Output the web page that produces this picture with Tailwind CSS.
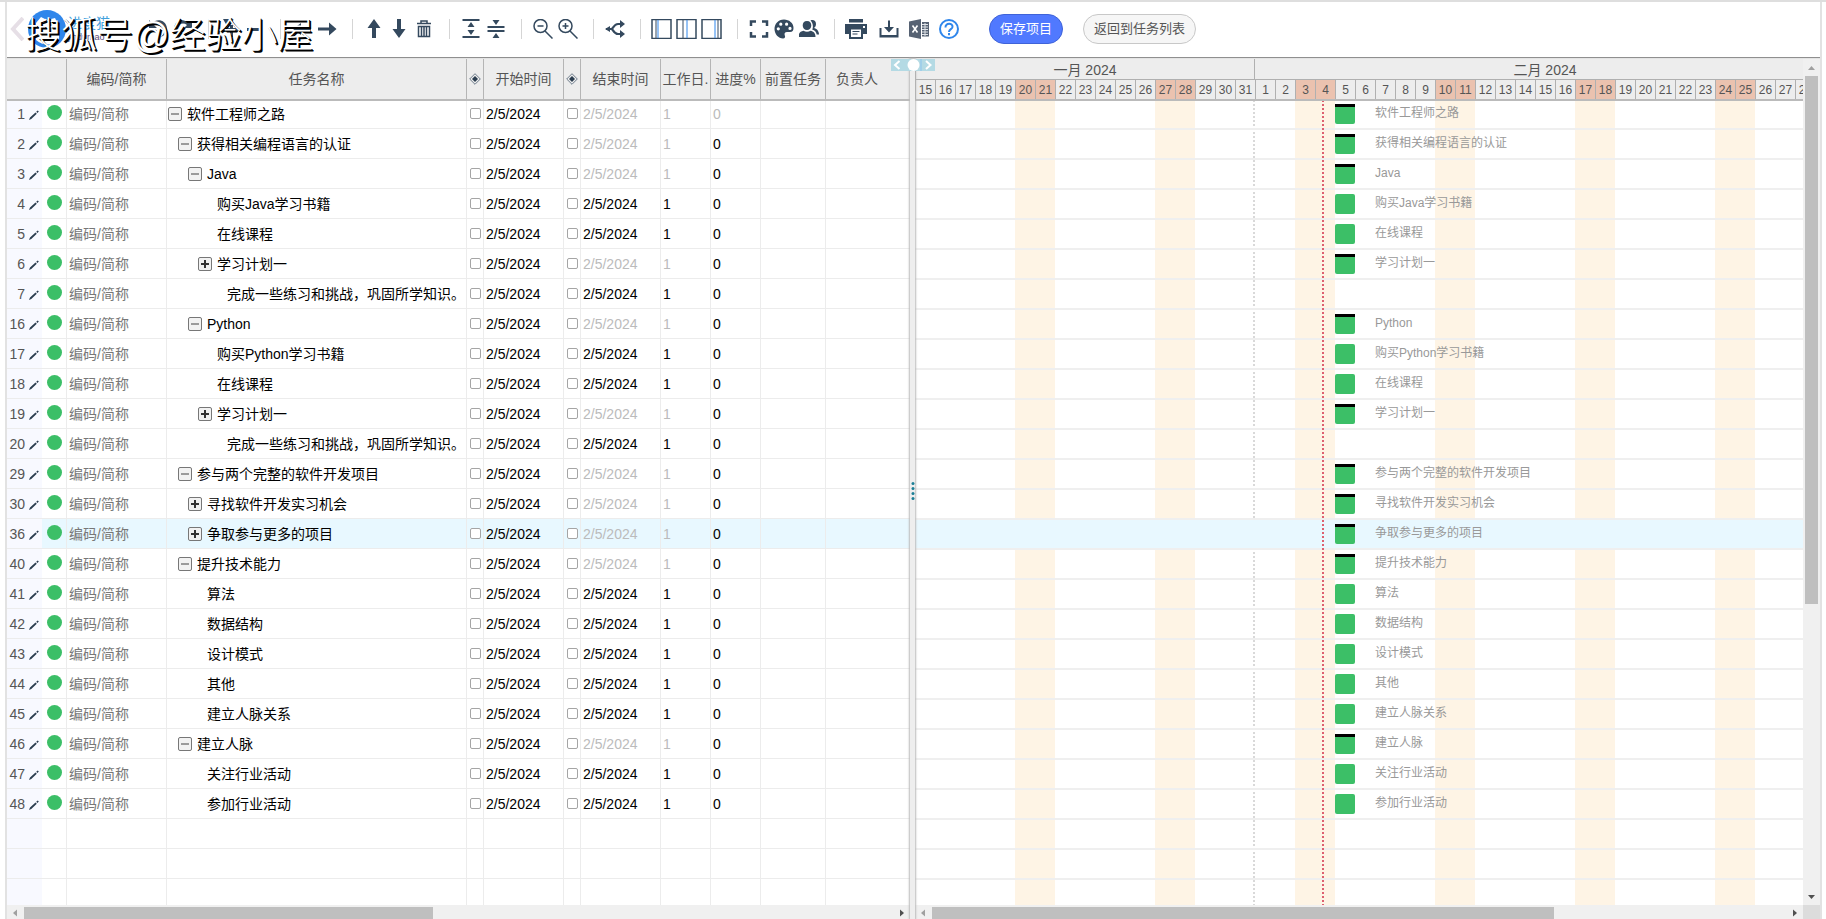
<!DOCTYPE html>
<html lang="zh-CN">
<head>
<meta charset="utf-8">
<title>软件工程师之路 - 甘特图</title>
<script src="https://cdn.jsdelivr.net/npm/@tailwindcss/browser@4"></script>
</head>
<body class="h-screen overflow-hidden bg-white font-['Liberation_Sans','Noto_Sans_CJK_SC',sans-serif] text-sm leading-5 text-black">
<div class="relative flex h-full flex-col border-t-2 border-[#dedede] pr-1 pl-[5px]">
  <div class="flex min-h-0 flex-1 flex-col border-x-2 border-[#e2e2e2]">

    <header class="flex h-14 shrink-0 items-center border-b border-[#8f8f8f] pb-[2px] text-[#34495e]">
      <a href="#" aria-label="返回" class="ml-[3px] block w-[14px] shrink-0">
        <svg viewBox="0 0 14 24" class="h-6 w-[14px]" fill="none" stroke="#e6dfe6" stroke-width="4"><path d="M13 1L3 12l10 11"/></svg>
      </a>
      <a href="#" class="ml-1 flex w-[117px] shrink-0 items-center">
        <svg viewBox="0 0 38 38" class="size-[38px]"><circle cx="19" cy="19" r="19" fill="#2f86eb"/><path d="M8 30V13l5-6 6 3 8-2 4 8v14c-6 6-16 6-23 0z" fill="#fff"/></svg>
        <span class="ml-[2px] flex flex-col"><span class="text-sm leading-4 text-[#3fa0dc]">进度猫</span><span class="text-[9px] leading-3 text-[#5b4a78]">jindumao</span></span>
      </a>
      <div id="tools" class="flex shrink-0 items-center"></div>
      <button class="ml-[28px] h-[30px] shrink-0 rounded-full border border-[#3f63d8] bg-[#5079ff] px-[10px] text-[13px] text-white">保存项目</button>
      <button class="ml-5 h-[30px] shrink-0 rounded-full border border-[#c8c8c8] bg-[#f6f6f6] px-[10px] text-[13px] text-[#555]">返回到任务列表</button>
    </header>

    <main class="relative flex min-h-0 flex-1 border-t border-[#e4e4e4]">
      <section class="flex w-[903px] shrink-0 flex-col">
        <div class="min-h-0 flex-1 overflow-hidden">
          <table class="w-full table-fixed border-separate border-spacing-0">
            <colgroup>
              <col class="w-[60px]"><col class="w-[100px]"><col class="w-[300px]"><col class="w-[17px]"><col class="w-[80px]"><col class="w-[17px]"><col class="w-[80px]"><col class="w-[50px]"><col class="w-[50px]"><col class="w-[65px]"><col>
            </colgroup>
            <thead id="head"></thead>
            <tbody id="rows"></tbody>
          </table>
        </div>
        <div class="flex h-[14px] shrink-0 items-end bg-[#f0f0f0]">
          <svg viewBox="0 0 17 12" class="h-3 w-[17px]"><path d="M10 2.500v7L6 6z" fill="#a0a0a0"/></svg>
          <div class="h-3 w-[409px] bg-[#bfbfbf]"></div>
          <svg viewBox="0 0 17 12" class="ml-auto h-3 w-[17px]"><path d="M7 2.500v7L11 6z" fill="#505050"/></svg>
        </div>
      </section>

      <div class="z-20 flex w-[5px] shrink-0 flex-col items-center bg-[#eee] pt-[422px] shadow-[0_0_2px_1px_#bbb]">
        <svg viewBox="0 0 4 20" class="h-5 w-1 shrink-0" fill="#1d7f96"><circle cx="2" cy="2.500" r="1.500"/><circle cx="2" cy="7.500" r="1.500"/><circle cx="2" cy="12.500" r="1.500"/><circle cx="2" cy="17.500" r="1.500"/></svg>
      </div>

      <section class="flex min-w-0 flex-1 flex-col">
        <div class="min-h-0 flex-1 overflow-hidden">
          <div class="relative z-10 overflow-hidden border-b-2 border-l border-b-[#bbb] border-l-[#999] bg-[#ededed] text-[#555]">
            <div class="flex h-[21px] border-b border-[#b0b0b0] leading-[22px]">
              <div class="w-[339px] shrink-0 border-r border-[#b0b0b0] text-center">一月 2024</div>
              <div class="w-[580px] shrink-0 text-center">二月 2024</div>
            </div>
            <div id="days" class="flex h-[19px] text-xs leading-[21px]"></div>
          </div>
          <div class="relative h-full">
            <div id="stripes" class="absolute inset-0 flex overflow-hidden"></div>
            <div id="bars" class="relative -mt-px"></div>
            <div class="absolute top-0 left-[407px] h-full border-l-2 border-dotted border-[#dd6070]"></div>
          </div>
        </div>
        <div class="relative z-10 flex h-[14px] shrink-0 items-end bg-[#f0f0f0]">
          <svg viewBox="0 0 17 12" class="h-3 w-[17px]"><path d="M10 2.500v7L6 6z" fill="#a0a0a0"/></svg>
          <div class="h-3 w-[622px] bg-[#bfbfbf]"></div>
          <svg viewBox="0 0 17 12" class="ml-auto h-3 w-[17px]"><path d="M7 2.500v7L11 6z" fill="#505050"/></svg>
        </div>
      </section>

      <div class="z-10 flex w-[17px] shrink-0 flex-col items-center bg-[#f0f0f0]">
        <svg viewBox="0 0 17 17" class="size-[17px] shrink-0"><path d="M5 11h7L8.500 7z" fill="#a0a0a0"/></svg>
        <div class="h-[528px] w-[13px] shrink-0 bg-[#bfbfbf]"></div>
        <svg viewBox="0 0 17 17" class="mt-auto size-[17px] shrink-0"><path d="M5 7h7L8.500 11z" fill="#505050"/></svg>
        <div class="h-[14px] w-full shrink-0 bg-[#dcdcdc]"></div>
      </div>

      <svg viewBox="0 0 44 12" class="absolute top-0 left-[884px] z-30 h-3 w-11"><path d="M0 0h44v12H0z" fill="#b4dae4"/><path d="M30 0v12" stroke="#8cc4ee"/><path d="M8.500 2L4 6l4.500 4M35 2l4.500 4L35 10" fill="none" stroke="#fff" stroke-width="2"/><circle cx="22.500" cy="6" r="6" fill="#fff"/></svg>
    </main>
  </div>
  <div class="pointer-events-none absolute top-[14px] left-[25px] z-40 text-4xl font-light whitespace-nowrap text-white [text-shadow:1px_1px_0_#000,2px_2px_0_#000]">搜狐号@经验小屋</div>
</div>

<script>
const svg = (body) => `<svg viewBox="0 0 20 20" class="size-5" fill="currentColor">${body}</svg>`;
const line = (body) => `<svg viewBox="0 0 20 20" class="size-5" fill="none" stroke="currentColor" stroke-width="1.5">${body}</svg>`;
const pane = (a, b) => `<svg viewBox="0 0 21 20" class="h-5 w-[21px]" fill="none" stroke="#34495e"><path d="M1 .5h19v19H1z" stroke-width="1.500"/><path d="M${a} 1v18"/><path d="M${b} 1v18" stroke="#2f86eb"/></svg>`;
const groups = [
  [['撤销', svg('<path d="M1 1v8h8L6 6c4-3 9-1 10 4s-2 7-4 8c5-1 8-5 7-9C18 1 9-1 4 4z"/>')], ['重做', svg('<path d="M19 1v8h-8l3-3c-4-3-9-1-10 4s2 7 4 8c-5-1-8-5-7-9C2 1 11-1 16 4z"/>')]],
  [['添加', svg('<path d="M3 0h7L7 7zM2 9h8V6h3v3h5v4h-5v5h-3v-5H2z"/>')], ['减少', svg('<path d="M2 9h15v3H2z"/>')]],
  [['升级', svg('<path d="M1 10l8-6v4h10v4H9v4z"/>')], ['降级', svg('<path d="M19.500 10L12 3.500v5H1v3h11v5z"/>')]],
  [['上移', svg('<path d="M10 0L3.500 9H8v10h4V9h4.500z"/>')], ['下移', svg('<path d="M10 19l6.500-9H12V0H8v10H3.500z"/>')],
   ['删除', line('<path d="M3 4.500h14M7 4V2h6v2M4.500 7.500h11v10h-11zM7.500 7v10M10 7v10M12.500 7v10"/>')]],
  [['展开', svg('<path d="M1.500 0h17v2h-17zM1.500 17h17v2h-17zM10 3l3.500 5h-7zM10 16l3.500-5h-7z"/>')], ['折叠', svg('<path d="M1.500 7h17v2h-17zM1.500 11h17v2h-17zM10 6l3.500-5h-7zM10 14l3.500 5h-7z"/>')]],
  [['缩小', line('<circle cx="7.500" cy="7" r="6.500"/><path d="M12 12l7.500 7.500M4.500 7h6"/>')], ['放大', line('<circle cx="7.500" cy="7" r="6.500"/><path d="M12 12l7.500 7.500M4.500 7h6M7.500 4v6"/>')]],
  [['关联', '<svg viewBox="0 0 20 20" class="size-5" fill="none" stroke="currentColor" stroke-width="2.200"><path d="M1 10h6M17 5h-4c-3 0-4.500 3-6 5 1.500 2 3 5 6 5h4"/><path d="M0 10l5-3v6zM15 1l5 4-5 4zM15 11l5 4-5 4z" fill="currentColor" stroke="none"/></svg>']],
  [['左栏', pane(5, 7)], ['双栏', pane(7, 11)], ['右栏', pane(17, 14)]],
  [['全屏', '<svg viewBox="0 0 20 20" class="size-5" fill="none" stroke="currentColor" stroke-width="2.500"><path d="M2 7V2.500h5M13 2.500h5V7M18 13v4.500h-5M7 17.500H2V13"/></svg>'],
   ['主题', svg('<path fill-rule="evenodd" d="M10 .5C4 .5.500 5 .500 10S4.500 19.500 9 19.500c2 0 2.500-1.500 1.800-3-.8-2 .2-3.500 2.200-3.500h3c2.500 0 3.500-1.500 3.500-4C19.500 4 15 .5 10 .5zM4.300 8.200a1.600 1.600 0 1 1 0 3.200 1.600 1.600 0 0 1 0-3.200zM6.800 3.600a1.600 1.600 0 1 1 0 3.200 1.600 1.600 0 0 1 0-3.200zM12.600 3.600a1.600 1.600 0 1 1 0 3.200 1.600 1.600 0 0 1 0-3.200zM16 7.800a1.600 1.600 0 1 1 0 3.200 1.600 1.600 0 0 1 0-3.200z"/>')],
   ['成员', svg('<path d="M8 2c3 0 4.300 2 4.300 4.500S10.500 11 8 11 3.700 9 3.700 6.500 5 2 8 2zM-.5 18c0-4 2-5.500 5-6.200 2 1.200 5 1.200 7 0 3 .7 5 2.200 5 6.200zM11.500 1.500c3-1.200 5.500.5 5.500 3.500 0 2-.8 3.300-2 4 2.500.8 5 2.500 5 6.500h-2.300c-.5-2.500-2-4.300-4.500-5C14.500 8 14 4 11.500 1.500z"/>')]],
];
const tail = [
  ['打印', 'w-[25px]', '<svg viewBox="0 0 22 20" class="h-5 w-[22px]" fill="currentColor"><path fill-rule="evenodd" d="M4 0h14v3.500H4zM0 5h22v10h-4v5H4v-5H0zM6 10.500h10V18H6zM18 7h2v2h-2z"/><path d="M7.500 12h7v1h-7zM7.500 14.500h5v1h-5z"/></svg>'],
  ['下载', 'ml-2 w-[25px]', svg('<path d="M.5 9h2v7h15V9h2v9.500H.500zM9 1.500h2V8h4l-5 5.500L5 8h4z"/>')],
  ['导出Excel', 'ml-[5px] w-[25px]', svg('<path d="M0 2.500L12 0v20L0 17.500zM13 3h7v14.500h-7z" fill="#566273"/><path d="M3.500 6.500l5 7M8.500 6.500l-5 7" stroke="#fff" stroke-width="1.600"/><path d="M13 5.500h6M13 8h6M13 10.500h6M13 13h6M13 15.500h6M16 4v13" stroke="#dfe3e8"/>')],
  ['帮助', 'ml-[5px] w-[25px]', '<svg viewBox="0 0 20 20" class="size-5" fill="none" stroke="#2f86eb" stroke-width="2"><circle cx="10" cy="10" r="9"/><path d="M6.500 8.500c-.3-5 7.500-4.800 7-.5-.3 2.200-3.500 2.300-3.500 5M10 14v2.200"/></svg>'],
];
const button = (label, size, icon) => `<button aria-label="${label}" class="flex h-7 shrink-0 items-center justify-center ${size}">${icon}</button>`;
const divider = '<span class="mr-2 ml-[13px] h-5 w-px shrink-0 bg-[#d5d5d5]"></span>';
document.getElementById('tools').innerHTML =
  groups.map(g => g.map(([l, i]) => button(l, 'w-[25px]', i)).join('')).join(divider) + divider +
  tail.map(([l, s, i]) => button(l, s, i)).join('');

// no, level, kind (m: expanded, p: collapsed, l: leaf), name, bar hidden
const tasks = [
  [1,0,'m','软件工程师之路'],[2,1,'m','获得相关编程语言的认证'],[3,2,'m','Java'],[4,3,'l','购买Java学习书籍'],[5,3,'l','在线课程'],
  [6,3,'p','学习计划一'],[7,4,'l','完成一些练习和挑战，巩固所学知识。',1],[16,2,'m','Python'],[17,3,'l','购买Python学习书籍'],[18,3,'l','在线课程'],
  [19,3,'p','学习计划一'],[20,4,'l','完成一些练习和挑战，巩固所学知识。',1],[29,1,'m','参与两个完整的软件开发项目'],[30,2,'p','寻找软件开发实习机会'],
  [36,2,'p','争取参与更多的项目'],[40,1,'m','提升技术能力'],[41,2,'l','算法'],[42,2,'l','数据结构'],[43,2,'l','设计模式'],[44,2,'l','其他'],
  [45,2,'l','建立人脉关系'],[46,1,'m','建立人脉'],[47,2,'l','关注行业活动'],[48,2,'l','参加行业活动'],
];
const diamond = '<svg viewBox="0 0 12 12" class="mx-auto size-3"><path d="M6 .7L11.300 6 6 11.300.700 6z" fill="none" stroke="#6d7b8a"/><path d="M6 3l3 3-3 3-3-3z" fill="#2c3e50"/></svg>';
document.getElementById('head').innerHTML = '<tr>' +
  ['', '编码/简称', '任务名称', diamond, '开始时间', diamond, '结束时间', '工作日.', '进度%', '前置任务'].map(t =>
    `<th class="relative h-10 overflow-hidden border-r border-[#b5b5b5] bg-[#ededed] p-0 text-center font-normal whitespace-nowrap text-[#555] shadow-[0_2px_0_#bbb]">${t}</th>`).join('') +
  '<th class="relative h-10 bg-[#ededed] p-0 pl-[10px] text-left font-normal text-[#555] shadow-[0_2px_0_#bbb]">负责人</th></tr>';

const indent = ['pl-px', 'pl-[11px]', 'pl-[21px]', 'pl-[31px]', 'pl-[41px]'];
const toggle = (kind) => kind === 'l' ? '<span class="w-[19px] shrink-0"></span>' :
  `<button aria-label="${kind === 'm' ? '折叠' : '展开'}" class="mr-[5px] size-[14px] shrink-0"><svg viewBox="0 0 14 14" class="size-[14px]"><rect x=".5" y=".5" width="13" height="13" rx="1.500" fill="#f2f2f2" stroke="#777"/>${kind === 'm' ? '<path d="M3 7h8" stroke="#444"/>' : '<path d="M3 7h8M7 3v8" stroke="#333" stroke-width="2"/>'}</svg></button>`;
const cell = (content, extra = '') => `<td class="h-[30px] overflow-hidden border-r border-b border-[#ececec] p-0 whitespace-nowrap ${extra}">${content}</td>`;
const check = (label) => `<input type="checkbox" aria-label="${label}" class="mx-auto block size-[11px] appearance-none rounded-[2px] border border-[#a5a5a5] bg-white">`;
const row = ([no, level, kind, name]) => {
  const dim = kind === 'l' ? '' : 'text-[#bbb]';
  return `<tr class="${no === 36 ? 'bg-[#e8f8ff]' : 'bg-white'}">` +
    cell(`<div class="flex h-full items-center"><div class="flex h-full w-[35px] items-center bg-[#f8f9ff] text-[#555]"><span class="w-[18px] text-right">${no}</span>
      <button aria-label="编辑" class="mt-[2px] ml-1"><svg viewBox="0 0 10 10" class="size-[10px]"><path d="M0 10l1-2.500L6.500 2.500 7.800 3.800 2.300 9zM7.200 1.800L8.800.400l1 1-1.400 1.500z" fill="#2c3e50"/></svg></button></div>
      <span class="mb-[3px] ml-[5px] size-[15px] rounded-full bg-[#3cbf67]"></span></div>`) +
    cell('编码/简称', 'pl-[2px] text-[#777]') +
    cell(`<div class="flex items-center ${indent[level]}">${toggle(kind)}${name}</div>`) +
    cell(check('开始里程碑')) + cell('2/5/2024', 'pl-[2px]') +
    cell(check('结束里程碑')) + cell('2/5/2024', 'pl-[2px] ' + dim) +
    cell('1', 'pl-[2px] ' + dim) + cell('0', no === 1 ? 'pl-[2px] text-[#bbb]' : 'pl-[2px]') + cell('') +
    '<td class="border-b border-[#ececec]"></td></tr>';
};
const blank = '<tr><td class="h-[30px] border-r border-b border-[#ececec] p-0"><div class="h-full w-[35px] bg-[#f8f9ff]"></div></td>' + cell('').repeat(9) + '<td class="border-b border-[#ececec]"></td></tr>';
document.getElementById('rows').innerHTML = tasks.map(row).join('') + blank.repeat(3);

const days = [];
for (let d = 15; d <= 31; d++) days.push([d, d % 7 === 6 || d % 7 === 0]);
for (let d = 1; d <= 28; d++) days.push([d, d % 7 === 3 || d % 7 === 4]);
document.getElementById('days').innerHTML = days.map(([d, off]) =>
  `<div class="w-5 shrink-0 border-r border-[#b0b0b0] text-center ${off ? 'bg-[#ebc2af]' : ''}">${d}</div>`).join('');
document.getElementById('stripes').innerHTML = days.map(([d, off], i) =>
  `<div class="w-5 shrink-0 ${off ? 'bg-[#fef4e5]' : ''} ${i === 16 ? 'border-r-2 border-dotted border-[#d9d9d9]' : ''}"></div>`).join('');

document.getElementById('bars').innerHTML = tasks.map(([no, , kind, name, hidden]) =>
  `<div class="flex h-[30px] items-start overflow-hidden border-b-2 border-[#efefef] ${no === 36 ? 'bg-[#e8f8ff]' : ''}">${hidden ? '' :
    `<div class="mt-1 ml-[420px] h-5 w-5 shrink-0 bg-[#3cbf67] ${kind === 'l' ? 'rounded-[2px]' : 'rounded-b-[2px] border-t-[3px] border-black'}"></div><span class="mt-[3px] ml-5 text-xs leading-5 whitespace-nowrap text-[#999]">${name}</span>`}</div>`).join('') +
  '<div class="h-[30px] border-b-2 border-[#efefef]"></div>'.repeat(3);
</script>
</body>
</html>
